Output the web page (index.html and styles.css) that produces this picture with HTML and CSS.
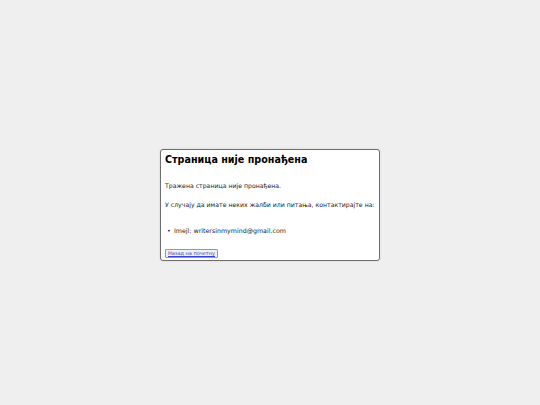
FILE: index.html
```html
<!DOCTYPE html>
<html lang="sr">
<head>
<meta charset="utf-8">
<link rel="stylesheet" href="styles.css">
</head>
<body>
<div class="page">
  <div class="card">
    <h1 class="title">Страница није пронађена</h1>
    <p class="text first">Тражена страница није пронађена.</p>
    <p class="text second">У случају да имате неких жалби или питања, контактирајте на:</p>
    <ul class="list">
      <li class="item">Imejl: writersinmymind@gmail.com</li>
    </ul>
    <button class="back"><a href="#">Назад на почетну</a></button>
  </div>
</div>
</body>
</html>
```
FILE: styles.css
```css
html, body {
  margin: 0;
  padding: 0;
  background: #efefef;
}
.page {
  box-sizing: border-box;
  width: 540px;
  height: 405px;
  padding-top: 5px;
  display: flex;
  align-items: center;
  justify-content: center;
  font-family: "DejaVu Sans", sans-serif;
}
.card {
  box-sizing: border-box;
  width: 220px;
  height: 112px;
  padding: 4px;
  background: #ffffff;
  border: 1px solid #6e6e6e;
  border-radius: 3px;
  box-shadow: 0 0 2px rgba(0,0,0,0.15);
  color: #222;
}
.title {
  margin: 0;
  font-size: 9.6px;
  font-weight: bold;
  line-height: 12px;
  color: #000;
}
.text {
  margin: 0;
  font-size: 6.2px;
  line-height: 8px;
  white-space: nowrap;
}
.text.first {
  margin-top: 16px;
}
.text.second {
  margin-top: 11px;
}
.list {
  margin: 18px 0 0 0;
  padding-left: 2px;
  list-style: none;
  font-size: 6.3px;
  line-height: 8px;
}
.item::before {
  content: "•";
  display: inline-block;
  width: 7px;
}
.back {
  display: block;
  margin-top: 14px;
  padding: 0 2px;
  font-family: "DejaVu Sans", sans-serif;
  font-size: 5px;
  line-height: 7px;
  background: #f0f0f0;
  border: 1px solid #999;
  border-radius: 1px;
}
.back a {
  color: #3344cc;
}
```
